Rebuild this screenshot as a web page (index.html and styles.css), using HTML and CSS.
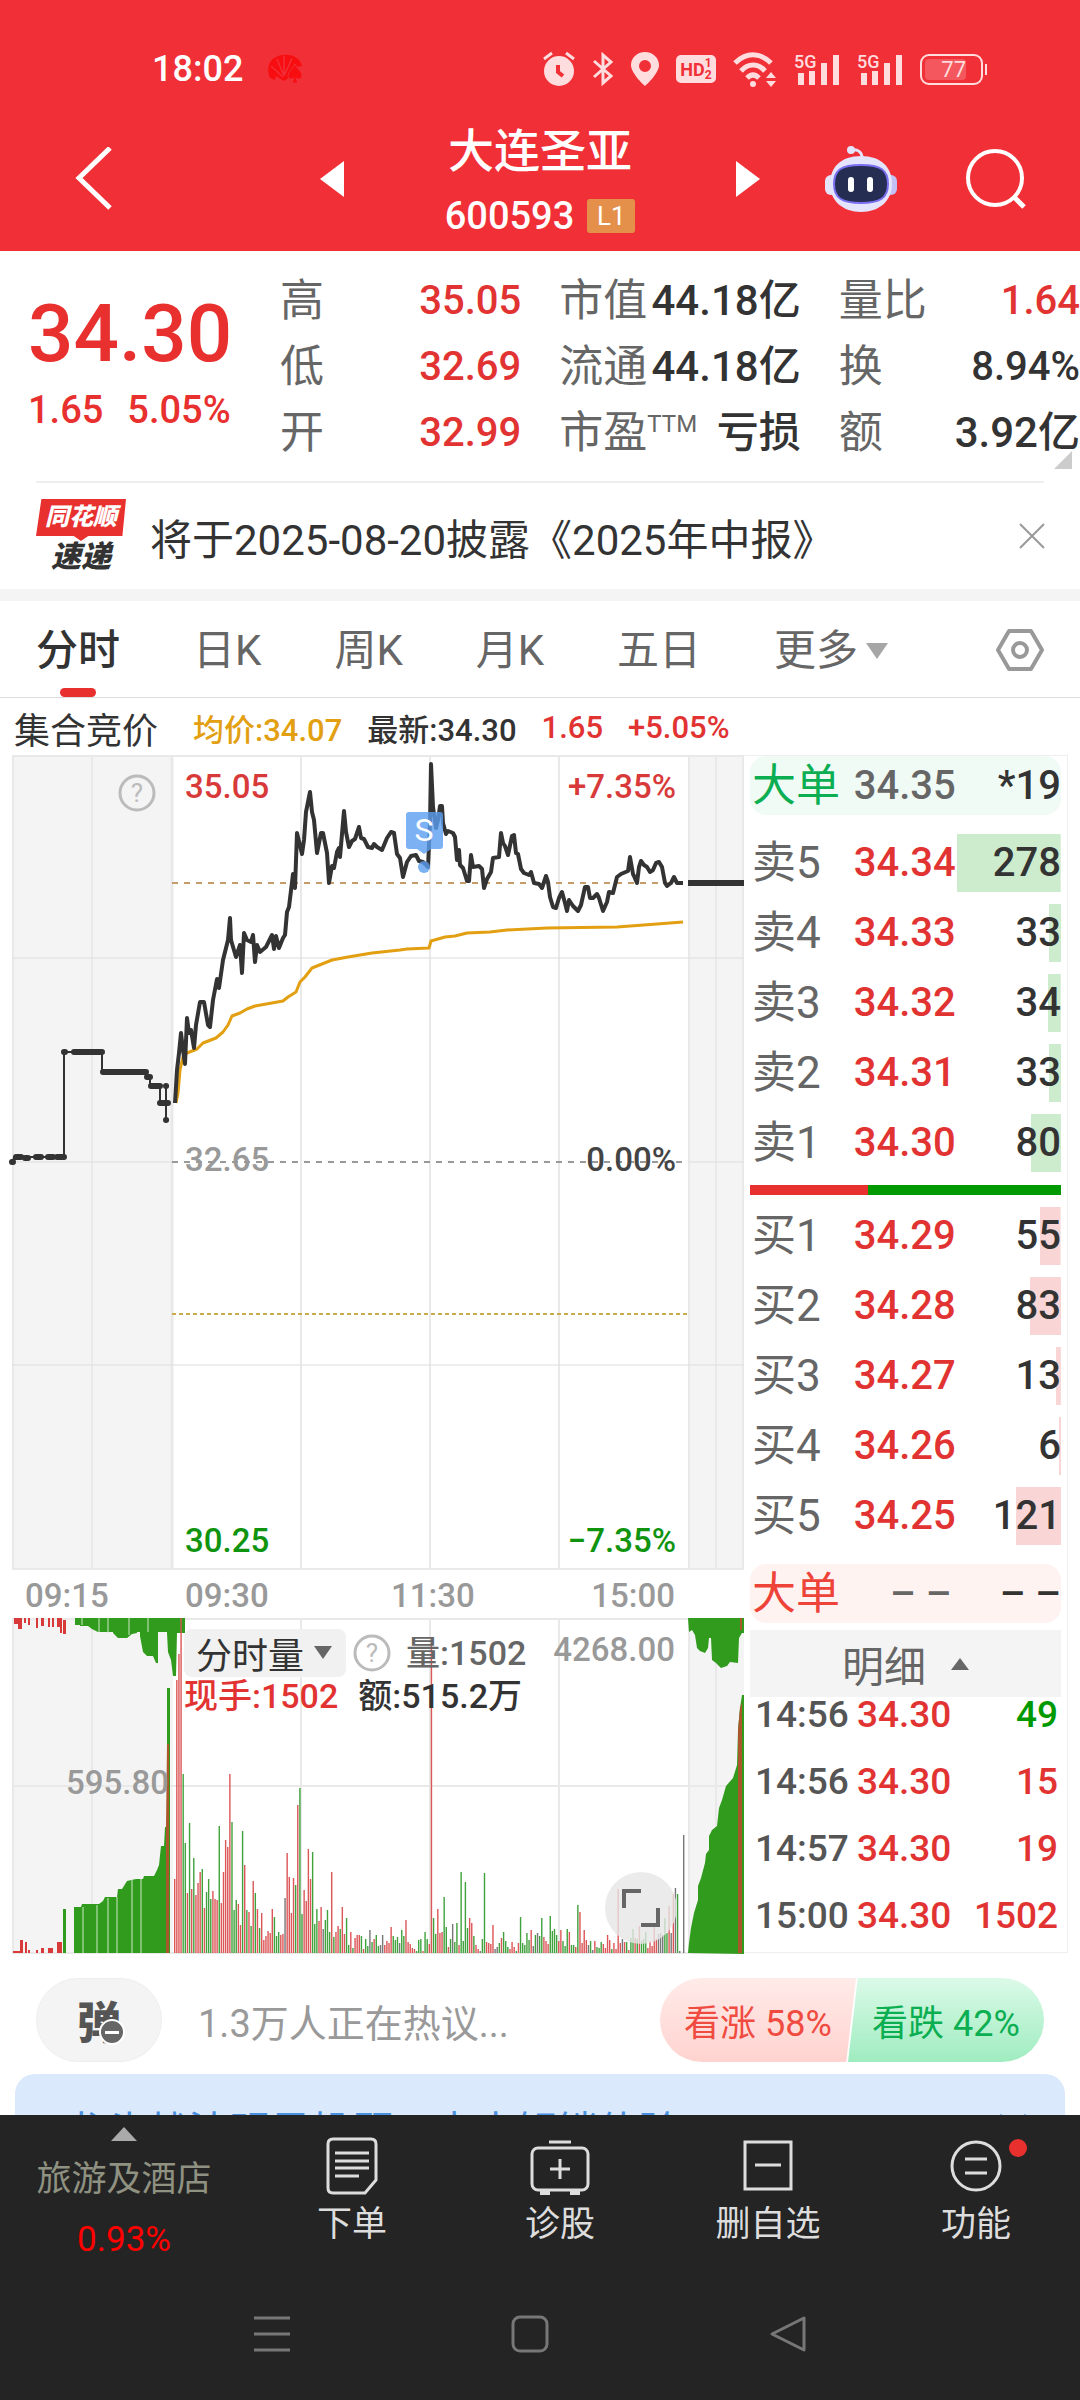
FILE: index.html
```html
<!DOCTYPE html>
<html lang="zh-CN">
<head>
  <meta charset="UTF-8">
  <meta name="viewport" content="width=device-width, initial-scale=1.0">
  <title>大连圣亚 600593</title>
  <link rel="stylesheet" href="styles.css">
</head>
<body>

<!-- 顶部 -->
<header class="header">
  <div class="status">
    <span class="clock">18:02</span>
    <svg class="huawei" width="36" height="30" viewBox="0 0 36 30" fill="#f80d10">
      <path d="M3 24C-1 15 2 6 9 3c6-3 14-3 19 0 4 2 6 5 7 9l-6 1-3 8-9 6-8-5-1 4z"/>
      <path d="M10 5l7 17M17 2v20M25 4l-7 16M4 12l12 11" stroke="#f12f37" stroke-width="1.5"/>
      <path d="M28 10c2 5 7 7 7 12 0 3-4 4-6 2l2 5h-6l2-5c-2 2-6 1-6-2 0-5 5-7 7-12z" stroke="#f12f37"/>
    </svg>
    <div class="status-icons">
      <svg width="32" height="36" viewBox="0 0 32 36"><circle cx="16" cy="20" r="15" fill="#ffdcdd"/><path d="M1 8l8-6M31 8l-8-6" stroke="#ffdcdd" stroke-width="3"/><path d="M15 14v7l5 4" stroke="#f12f37" stroke-width="4" fill="none"/></svg>
      <svg width="22" height="34" viewBox="0 0 22 34" fill="none" stroke="#ffdcdd" stroke-width="3"><path d="M2 9l17 15-8 7V3l8 7L2 25"/></svg>
      <svg width="28" height="36" viewBox="0 0 28 36"><path d="M14 1C6 1 0 7 0 14c0 9 14 21 14 21s14-12 14-21C28 7 22 1 14 1zm0 8a6 6 0 1 1 0 12 6 6 0 0 1 0-12z" fill="#ffdcdd" fill-rule="evenodd"/></svg>
      <span class="hd">HD<small>1<br>2</small></span>
      <svg width="44" height="36" viewBox="0 0 44 36" fill="none" stroke="#ffdcdd" stroke-width="5"><path d="M2 12c11-11 25-11 36 0M8 20c7-8 17-8 24 0M14 27c4-4 8-4 12 0"/><circle cx="20" cy="33" r="3" fill="#ffdcdd" stroke="none"/><path d="M33 27l5-6 5 6zM33 30l5 6 5-6z" fill="#ffdcdd" stroke="none"/></svg>
      <svg width="46" height="36" viewBox="0 0 46 36" fill="#ffdcdd"><text x="0" y="17" class="g5">5G</text><path d="M4 22h6v12H4zM15 20h6v14h-6zM27 12h6v22h-6zM39 4h6v30h-6z"/></svg>
      <svg width="46" height="36" viewBox="0 0 46 36" fill="#ffdcdd"><text x="0" y="17" class="g5">5G</text><path d="M4 22h6v12H4zM15 20h6v14h-6zM27 12h6v22h-6zM39 4h6v30h-6z"/></svg>
      <span class="battery"><span>77</span></span>
    </div>
  </div>

  <nav class="nav">
    <button class="icon-btn" aria-label="返回">
      <svg width="38" height="64" viewBox="0 0 38 64" fill="none" stroke="#fff" stroke-width="5"><path d="M35 1L4 31l31 30"/></svg>
    </button>
    <div class="nav-center">
      <button class="icon-btn" aria-label="上一只"><svg width="24" height="36" viewBox="0 0 24 36" fill="#fff"><path d="M24 0v36L0 18z"/></svg></button>
      <div class="title">
        <h1>大连圣亚</h1>
        <p><span class="num">600593</span><span class="tag">L1</span></p>
      </div>
      <button class="icon-btn" aria-label="下一只"><svg width="24" height="36" viewBox="0 0 24 36" fill="#fff"><path d="M0 0v36l24-18z"/></svg></button>
    </div>
    <div class="nav-right">
      <button class="icon-btn" aria-label="助手">
        <svg width="72" height="68" viewBox="0 0 72 68">
          <path d="M26 5c7-1 11 2 11 8" stroke="#e4e4fd" stroke-width="3" fill="none"/>
          <circle cx="26" cy="5" r="4" fill="#e4e4fd"/>
          <rect x="0" y="30" width="12" height="20" rx="6" fill="#e4e4fd"/><rect x="60" y="30" width="12" height="20" rx="6" fill="#c3c0f5"/>
          <path d="M36 11c20 0 31 11 31 28S54 67 36 67 5 56 5 39s11-28 31-28z" fill="#e4e4fd"/>
          <path d="M36 20c20 0 27 5 27 19s-8 19-27 19S9 53 9 39s7-19 27-19z" fill="#252e52" stroke="#7a6ff0" stroke-width="2"/>
          <rect x="23" y="32" width="6" height="15" rx="3" fill="#fff"/><rect x="42" y="32" width="6" height="15" rx="3" fill="#fff"/>
        </svg>
      </button>
      <button class="icon-btn" aria-label="搜索">
        <svg width="62" height="62" viewBox="0 0 62 62" fill="none" stroke="#fff" stroke-width="4"><circle cx="30" cy="30" r="27"/><path d="M49 49l10 10" stroke-width="5"/></svg>
      </button>
    </div>
  </nav>
</header>

<main class="content">
  <!-- 行情 -->
  <section class="quote">
    <div class="price num">
      <strong>34.30</strong>
      <p><span>1.65</span><span>5.05%</span></p>
    </div>
    <div class="stats">
      <dl>
        <div><dt>高</dt><dd class="num red">35.05</dd></div>
        <div><dt>低</dt><dd class="num red">32.69</dd></div>
        <div><dt>开</dt><dd class="num red">32.99</dd></div>
      </dl>
      <dl>
        <div><dt>市值</dt><dd class="num unit">44.18亿</dd></div>
        <div><dt>流通</dt><dd class="num unit">44.18亿</dd></div>
        <div><dt>市盈<sup>TTM</sup></dt><dd class="num unit">亏损</dd></div>
      </dl>
      <dl>
        <div><dt>量比</dt><dd class="num red">1.64</dd></div>
        <div><dt>换</dt><dd class="num">8.94%</dd></div>
        <div><dt>额</dt><dd class="num unit">3.92亿</dd></div>
      </dl>
    </div>
    <span class="corner"></span>
  </section>

  <section class="notice">
    <div class="express"><b>同花顺</b><i>速递</i></div>
    <a href="#">将于2025-08-20披露《2025年中报》</a>
    <button class="icon-btn" aria-label="关闭"><svg width="26" height="26" viewBox="0 0 26 26" stroke="#999" stroke-width="2"><path d="M1 1l24 24M25 1L1 25"/></svg></button>
  </section>

  <!-- 周期切换 -->
  <nav class="tabs">
    <a href="#" class="active">分时</a>
    <a href="#">日K</a>
    <a href="#">周K</a>
    <a href="#">月K</a>
    <a href="#">五日</a>
    <a href="#" class="more">更多<svg width="22" height="18" viewBox="0 0 22 18" fill="#a6a6a6"><path d="M0 1h22L11 17z"/></svg></a>
    <button class="icon-btn settings" aria-label="设置">
      <svg width="50" height="46" viewBox="0 0 50 46" fill="none" stroke="#999" stroke-width="4" stroke-linejoin="round"><path d="M14 5h22l11 19-11 19H14L3 24z"/><circle cx="25" cy="24" r="7"/></svg>
    </button>
  </nav>
  <div class="info">
    <span class="auction">集合竞价</span>
    <span class="num avg">均价:34.07</span>
    <span class="num">最新:34.30</span>
    <span class="num red">1.65</span>
    <span class="num red">+5.05%</span>
  </div>

  <section class="board">
    <div class="chart">
      <svg viewBox="0 0 744 1199">
        <!-- 分时 -->
        <path fill="#f4f4f4" d="M13 1h160v813H13zM689 1h55v813h-55zM13 863h160v335H13zM689 863h55v335h-55z"/>
        <g stroke="#e9e9e9" stroke-width="2" fill="none">
          <path d="M12 1h732M12 814h732M13 1v813M92 1v813M301 1v813M430 1v813M559 1v813M689 1v813M716 1v813M743 1v813"/>
          <path d="M172 1v813" stroke-width="3"/>
          <path d="M12 203h732M12 407h160M689 407h55M12 610h732" stroke-width="1" stroke="#ddd"/>
          <path d="M12 864h732M12 1031h732M12 1198h732M13 864v334M92 864v334M301 864v334M430 864v334M559 864v334M689 864v334M716 864v334"/>
        </g>
        <g fill="none" stroke-width="2">
          <path d="M172 128h516" stroke="#c69c6d" stroke-dasharray="6 6"/>
          <path d="M172 407h516" stroke="#999" stroke-dasharray="6 6"/>
          <path d="M172 559h516" stroke="#c9ab49" stroke-dasharray="4 3"/>
        </g>
        <path d="M13 407l1-5h50V297h38v20h44v5h4v9h10v17h6v17V331" fill="none" stroke="#333" stroke-width="2"/>
        <path d="M12 407h1M16 402h5M25 403h3M36 402h5M48 402h5M57 402h7M64 297h1M74 297h28M103 317h43M147 322h3M151 331h9M160 348h8M166 331h.1M166 365h.1" fill="none" stroke="#333" stroke-width="6" stroke-linecap="round"/>
        <polyline class="line avg-line" points="176,348 178,338 180,315 183,302 187,298 197,294 203,288 216,283 223,277 228,270 232,261 240,258 247,254 255,251 283,246 288,242 296,237 300,227 305,222 312,213 322,209 332,205 348,202 372,198 400,195 407,194 429,193 431,186 445,182 455,181 467,178 490,177 507,175 547,173 617,172 657,169 683,167"/>
        <polyline class="line" points="175,348 177,315 179,298 181,278 183,295 185,309 187,263 189,278 191,275 194,293 196,270 200,247 204,247 208,270 210,272 213,245 217,224 219,233 223,205 228,185 230,163 231,185 236,202 240,190 242,218 244,178 247,185 251,187 253,180 255,207 257,190 260,197 266,192 272,180 274,194 276,181 279,193 283,183 285,180 287,157 289,152 293,119 295,133 297,78 302,99 304,85 306,57 310,37 312,57 314,65 317,98 321,78 323,78 327,98 329,128 332,111 334,113 337,97 339,93 340,102 344,56 346,77 349,92 352,86 355,84 359,72 361,83 364,84 368,92 372,93 374,89 377,92 382,95 387,83 391,77 394,78 397,99 400,103 403,122 407,107 411,101 416,100 419,106 423,107 428,112 430,68 431,9 433,52 436,73 438,65 440,51 442,51 443,68 446,79 448,76 453,78 455,82 457,105 459,95 460,110 463,113 467,126 469,126 471,100 473,112 479,111 482,114 484,133 487,124 491,117 493,103 499,102 501,78 503,88 505,91 508,100 512,81 514,80 516,98 518,99 521,114 524,118 529,120 531,117 534,128 539,129 542,133 546,121 548,127 550,142 553,152 556,153 559,143 562,137 565,148 567,156 569,145 573,151 578,156 581,150 585,132 588,132 590,143 593,143 597,139 599,143 603,156 607,147 609,137 613,138 617,122 621,119 628,116 630,102 633,119 634,121 637,128 639,112 641,106 644,110 647,112 650,117 653,115 656,108 659,107 662,112 665,128 667,131 671,128 674,122 677,128 683,128"/>
        <path d="M688 128h56" stroke="#333" stroke-width="6"/>
        <g fill="#5b9df0" fill-opacity=".8">
          <path d="M409 57h31q3 0 3 3v31q0 3-3 3h-9l-7 5-7-5h-8q-3 0-3-3V60q0-3 3-3z"/>
          <circle cx="424" cy="112" r="6"/>
        </g>
        <text x="424" y="86" class="mark">S</text>
        <circle cx="137" cy="38" r="17" fill="none" stroke="#bbb" stroke-width="3"/>
        <text x="137" y="47" class="help">?</text>
        <g class="scale">
          <text x="185" y="43" fill="#d83a3a">35.05</text>
          <text x="676" y="43" fill="#d83a3a" class="end">+7.35%</text>
          <text x="185" y="416" fill="#999">32.65</text>
          <text x="676" y="416" fill="#444" class="end">0.00%</text>
          <text x="185" y="797" fill="#109410">30.25</text>
          <text x="676" y="797" fill="#109410" class="end">−7.35%</text>
        </g>
        <g class="scale" fill="#999">
          <text x="25" y="852">09:15</text>
          <text x="185" y="852">09:30</text>
          <text x="391" y="852">11:30</text>
          <text x="675" y="852" class="end">15:00</text>
        </g>
        <!-- 成交量 -->
        <g transform="translate(0 863)">
          <g fill="#319b1d">
            <path d="M75 0v7h5v1h8l4 3 6 3h15v1l5 5h9l5-4 5-1v-1h3v4l3 16 4 4h6l3 7h2V14h9v1l1 19 3 8 2 16h3l1-43h8V0z"/>
            <path d="M63 291h3v44h-3zM74 335v-46h7l1-3h17l4-3 2-4h12l1-8h4l5-8 9-2h7l1-3h10l3-6 2-5 2-19h3l1-19h2V70h3v265z"/>
            <path d="M688 0l1 14 3-2 3 5 2 13 3 3 5 2 3-5 1-10h2l1 22 4 3 5 5 6-2 3-4 8 1 1-25 3-5h2V0z"/>
            <path d="M688 335l1-10 2-15 3-15 4-13v-14l3-8 4-15 1-9 3-4v-14l3-6 5-4 2-18 3-8 4-14 7-8 4-13 1-35 2-22 2-13h2v259z"/>
          </g>
          <path fill="#a9572b" d="M166 209v126h3V126h-2zM738 112v223h4V84l-2 6zM740 0h2v12h-2z"/>
          <path stroke="#cfe8c8" d="M82 0v7M99 0v14M108 0v15M129 0v17M148 0v14M83 289v46M97 287v48M108 280v55M117 279v56M132 262v73M141 261v74"/>
          <path fill="#d83a3a" d="M14 0h4v6h-4zM18 0h4v11h-4zM24 0h2v5h-2zM28 0h2v7h-2zM36 0h2v10h-2zM41 0h3v8h-3zM48 0h2v9h-2zM52 0h2v9h-2zM57 0h3v9h-3zM60 0h2v15h-2zM63 2h3v14h-3zM13 333h7v2h-7zM20 322h3v13h-3zM25 324h2v11h-2zM28 332h2v3h-2zM36 332h2v3h-2zM41 330h3v5h-3zM48 330h5v5h-5zM57 324h5v11h-5z"/>
          <g id="volume"></g>
          <g class="scale" fill="#999">
            <text x="675" y="43" class="end">4268.00</text>
            <text x="169" y="176" class="end">595.80</text>
          </g>
        </g>
      </svg>
      <div class="volume-head">
        <p>
          <button class="select">分时量<svg width="18" height="14" viewBox="0 0 18 14" fill="#666"><path d="M0 0h18L9 13z"/></svg></button>
          <svg width="38" height="38" viewBox="0 0 38 38"><circle cx="19" cy="19" r="17" fill="none" stroke="#bbb" stroke-width="3"/><text x="19" y="28" class="help">?</text></svg>
          <span class="num vol">量:1502</span>
        </p>
        <p class="num deal"><span class="red">现手:1502</span><span>额:515.2万</span></p>
      </div>
      <button class="expand" aria-label="全屏"><svg width="38" height="38" viewBox="0 0 38 38" fill="none" stroke="#666" stroke-width="4"><path d="M2 19V2h17M36 19v17H19"/></svg></button>
    </div>

    <!-- 五档盘口 -->
    <div class="book">
      <table class="orders">
        <tr class="big sell"><th>大单</th><td>34.35</td><td>*19</td></tr>
        <tr class="gap"><td colspan="3"></td></tr>
        <tr class="ask"><th>卖5</th><td>34.34</td><td style="--v:278">278</td></tr>
        <tr class="ask"><th>卖4</th><td>34.33</td><td style="--v:33">33</td></tr>
        <tr class="ask"><th>卖3</th><td>34.32</td><td style="--v:34">34</td></tr>
        <tr class="ask"><th>卖2</th><td>34.31</td><td style="--v:33">33</td></tr>
        <tr class="ask"><th>卖1</th><td>34.30</td><td style="--v:80">80</td></tr>
      </table>
      <div class="ratio"></div>
      <table class="orders">
        <tr class="bid"><th>买1</th><td>34.29</td><td style="--v:55">55</td></tr>
        <tr class="bid"><th>买2</th><td>34.28</td><td style="--v:83">83</td></tr>
        <tr class="bid"><th>买3</th><td>34.27</td><td style="--v:13">13</td></tr>
        <tr class="bid"><th>买4</th><td>34.26</td><td style="--v:6">6</td></tr>
        <tr class="bid"><th>买5</th><td>34.25</td><td style="--v:121">121</td></tr>
        <tr class="gap"><td colspan="3"></td></tr>
        <tr class="big buy"><th>大单</th><td>– –</td><td>– –</td></tr>
      </table>
      <button class="detail">明细<svg width="18" height="12" viewBox="0 0 18 12" fill="#666"><path d="M0 12h18L9 0z"/></svg></button>
      <table class="trades">
        <tr><td>14:56</td><td>34.30</td><td class="green">49</td></tr>
        <tr><td>14:56</td><td>34.30</td><td>15</td></tr>
        <tr><td>14:57</td><td>34.30</td><td>19</td></tr>
        <tr><td>15:00</td><td>34.30</td><td>1502</td></tr>
      </table>
    </div>
  </section>

  <!-- 热议 -->
  <section class="talk">
    <button class="danmu" aria-label="弹幕">弹<span></span></button>
    <a href="#">1.3万人正在热议...</a>
    <div class="vote">
      <button class="up">看涨 58%</button>
      <button class="down">看跌 42%</button>
    </div>
  </section>
  <section class="promo">
    <span>龙头战法明星投顾，点击解锁体验</span>
    <svg width="28" height="28" viewBox="0 0 28 28" stroke="#4a90e2" stroke-width="3"><path d="M1 1l26 26M27 1L1 27"/></svg>
  </section>
</main>

<!-- 底部 -->
<footer class="footer">
  <nav class="toolbar">
    <a href="#" class="sector">
      <svg width="26" height="14" viewBox="0 0 26 14" fill="#aaa"><path d="M0 14h26L13 0z"/></svg>
      <span>旅游及酒店</span>
      <b>0.93%</b>
    </a>
    <a href="#">
      <svg width="60" height="58" viewBox="0 0 60 58" fill="none" stroke="#ddd" stroke-width="3"><path d="M11 2h38q5 0 5 5v36L43 56H11q-5 0-5-5V7q0-5 5-5z"/><path d="M13 16h34M13 24h34M13 31h34M13 39h24"/></svg>
      <span>下单</span>
    </a>
    <a href="#">
      <svg width="60" height="58" viewBox="0 0 60 58" fill="none" stroke="#ddd" stroke-width="3"><rect x="2" y="11" width="56" height="42" rx="6"/><path d="M19 5h22M30 22v20M20 32h20"/><path d="M10 56h10M40 56h10" stroke-width="4"/></svg>
      <span>诊股</span>
    </a>
    <a href="#">
      <svg width="60" height="58" viewBox="0 0 60 58" fill="none" stroke="#ddd" stroke-width="3"><path d="M7 5h46v47H7zM17 28h26"/></svg>
      <span>删自选</span>
    </a>
    <a href="#" class="dot">
      <svg width="60" height="58" viewBox="0 0 60 58" fill="none" stroke="#ddd" stroke-width="3"><circle cx="30" cy="29" r="24"/><path d="M19 22h22M19 36h22"/></svg>
      <span>功能</span>
    </a>
  </nav>
  <div class="system">
    <svg width="38" height="38" viewBox="0 0 38 38" stroke="#777" stroke-width="3"><path d="M1 3h36M1 19h36M1 35h36"/></svg>
    <svg width="38" height="38" viewBox="0 0 38 38" fill="none" stroke="#777" stroke-width="3"><rect x="2" y="2" width="34" height="34" rx="7"/></svg>
    <svg width="38" height="38" viewBox="0 0 38 38" fill="none" stroke="#777" stroke-width="3" stroke-linejoin="round"><path d="M35 3v32L3 19z"/></svg>
  </div>
</footer>

<script>
  // 每分钟成交量: 颜色 + 柱高
  const minutes = 'r74 r273 r299 r335 g179 g110 r60 g130 r64 g95 r58 r70 r81 g84 r45 g61 g74 g54 r62 r54 r53 g127 r50 r81 r113 r106 r179 g131 g43 g53 r49 r28 g122 r88 g43 r41 g27 r72 g60 r44 g25 r40 r13 r17 r22 r20 r44 g36 g17 g21 r18 r19 k55 r100 r76 r40 r75 g68 r148 g165 g39 r63 r52 r104 r74 g101 g29 g44 r32 r46 k24 g33 g43 g21 r81 g16 r21 r27 g24 r46 r19 g35 g8 r21 g5 r15 r18 r18 g17 r4 g14 g7 k23 g11 r14 g18 g7 k8 k18 r8 r12 r10 r26 g17 g13 g16 k10 g23 g17 r33 r11 r9 r5 r4 g2 g13 g14 r2 g21 g14 r9 r310 g35 g19 r44 r20 r21 g56 g26 r6 g14 k29 g11 g30 r8 g81 g12 g71 g25 r35 r30 g17 r8 r4 k2 g14 g80 r11 r10 r9 r28 k4 k6 g10 r15 g21 g12 g6 r4 r11 r6 g2 r10 g36 g10 g8 g20 g13 r23 k7 g18 k20 g17 g35 r16 r12 r9 g37 g22 g24 g18 r12 r23 g12 g7 g24 r21 g8 g8 r6 g48 r41 r10 r23 r13 k8 g12 k3 r12 g6 g5 g11 r9 r5 r18 r13 g4 r10 r4 r64 r10 k14 r11 g11 r3 g15 g24 r15 g14 r27 g12 g14 g21 r5 r12 r7 r28 r14 k19 k20 k18 g35 g20 r47 k20 r59 k65 g59 k2';
  const colors = { r: '#dc5557', g: '#3fa23c', k: '#777' };
  const volume = document.getElementById('volume');

  function addBar(x, height, color) {
    const bar = document.createElementNS('http://www.w3.org/2000/svg', 'rect');
    bar.setAttribute('x', x);
    bar.setAttribute('y', 335 - height);
    bar.setAttribute('width', 1.4);
    bar.setAttribute('height', height);
    bar.setAttribute('fill', colors[color]);
    volume.appendChild(bar);
  }

  const list = minutes.split(' ');
  list.forEach(function(item, i) {
    addBar(174 + i * 505 / (list.length - 1), Number(item.slice(1)), item[0]);
  });
  // 收盘集合竞价
  addBar(683, 118, 'k');
</script>

</body>
</html>
```

FILE: styles.css
```css
* {
  box-sizing: border-box;
}
body {
  margin: 0;
  height: 100vh;
  display: flex;
  flex-direction: column;
  background: #fff;
  color: #333;
  font-family: Roboto, "Noto Sans CJK SC", sans-serif;
  overflow: hidden;
}
h1, p, dl, dd {
  margin: 0;
}
a {
  color: inherit;
  text-decoration: none;
}
button {
  border: none;
  background: none;
  padding: 0;
  font-family: inherit;
  color: inherit;
  cursor: pointer;
}
svg {
  display: block;
  flex: none;
}
.icon-btn {
  display: block;
}
.num {
  font-weight: 500;
}
.red {
  color: #e23333;
}

/* 顶部 */
.header {
  flex: none;
  background: #f12f37;
  color: #fff;
}
.status {
  display: flex;
  align-items: center;
  height: 106px;
  padding: 32px 93px 0 152px;
}
.clock {
  font-size: 36px;
  font-weight: 500;
}
.huawei {
  margin-left: 24px;
}
.status-icons {
  display: flex;
  align-items: center;
  gap: 17px;
  margin-left: auto;
  color: #ffdcdd;
}
.hd {
  display: flex;
  align-items: center;
  justify-content: center;
  width: 40px;
  height: 28px;
  border-radius: 5px;
  background: #ffdcdd;
  color: #f12f37;
  font-size: 18px;
  font-weight: 700;
}
.hd small {
  font-size: 12px;
  line-height: 12px;
}
.g5 {
  font-size: 18px;
  font-weight: 500;
}
.battery {
  position: relative;
  width: 63px;
  height: 31px;
  margin-right: 4px;
  padding: 3px;
  border: 2px solid #ffdcdd;
  border-radius: 9px;
}
.battery::after {
  content: "";
  position: absolute;
  right: -6px;
  top: 8px;
  width: 2px;
  height: 11px;
  background: #ffdcdd;
}
.battery span {
  display: block;
  width: 41px;
  border-radius: 4px;
  background: #f4585e;
  font-size: 22px;
  line-height: 21px;
  text-align: right;
}
.nav {
  display: grid;
  grid-template-columns: 1fr 440px 1fr;
  align-items: center;
  height: 145px;
}
.nav > .icon-btn {
  margin-left: 75px;
}
.nav-center {
  display: flex;
  align-items: center;
  justify-content: space-between;
}
.title h1 {
  font-size: 46px;
  font-weight: 500;
  line-height: 54px;
  text-align: center;
}
.title p {
  display: flex;
  align-items: center;
  justify-content: center;
  gap: 13px;
  height: 36px;
  margin-top: 20px;
  font-size: 38px;
}
.tag {
  width: 48px;
  border-radius: 3px;
  background: #e5904a;
  font-size: 26px;
  line-height: 34px;
  text-align: center;
}
.nav-right {
  display: flex;
  align-items: center;
  justify-content: flex-end;
  gap: 68px;
  padding-right: 53px;
}

/* 行情 */
.content {
  flex: 1;
  min-height: 0;
  overflow: hidden;
}
.quote {
  position: relative;
  display: grid;
  grid-template-columns: 252px 1fr;
  padding: 17px 0 17px 28px;
}
.quote::after {
  content: "";
  position: absolute;
  left: 36px;
  right: 36px;
  bottom: 0;
  height: 2px;
  background: #eee;
}
.price {
  padding-top: 20px;
  color: #e8302f;
}
.price strong {
  display: block;
  font-size: 80px;
  font-weight: 500;
  line-height: 92px;
}
.price p {
  display: flex;
  gap: 24px;
  font-size: 38px;
  line-height: 60px;
}
.stats {
  display: grid;
  grid-template-columns: repeat(3, minmax(0, 1fr));
  gap: 38px;
}
.stats dl div {
  display: flex;
  justify-content: space-between;
  height: 66px;
  font-size: 44px;
  line-height: 66px;
  white-space: nowrap;
}
.stats dt {
  color: #666;
}
.stats dd {
  font-size: 40px;
}
.stats .unit {
  font-size: 42px;
}
.stats sup {
  font-size: 24px;
  line-height: 24px;
}
.corner {
  position: absolute;
  right: 8px;
  bottom: 14px;
  border: 9px solid;
  border-color: transparent #ccc #ccc transparent;
}
.notice {
  display: flex;
  align-items: center;
  height: 106px;
  padding: 0 35px 0 36px;
}
.notice a {
  flex: 1;
  font-size: 42px;
}
.express {
  width: 90px;
  margin-right: 24px;
  text-align: center;
  font-style: italic;
  font-weight: 900;
}
.express b {
  display: block;
  height: 42px;
  background: #e8302f;
  clip-path: polygon(6% 0, 100% 0, 96% 88%, 58% 88%, 50% 100%, 42% 88%, 0 88%);
  color: #fff;
  font-size: 24px;
  line-height: 36px;
}
.express i {
  display: block;
  font-size: 30px;
  line-height: 32px;
}

/* 周期切换 */
.tabs {
  display: flex;
  align-items: center;
  gap: 73px;
  height: 109px;
  padding: 0 35px 0 36px;
  border-top: 12px solid #f4f4f4;
  border-bottom: 1px solid #ddd;
  color: #666;
  font-size: 42px;
  line-height: 96px;
}
.tabs a {
  position: relative;
  padding-top: 4px;
  line-height: 92px;
}
.tabs .active {
  color: #333;
  font-weight: 500;
}
.tabs .active::after {
  content: "";
  position: absolute;
  left: 24px;
  right: 24px;
  bottom: 0;
  height: 9px;
  border-radius: 5px;
  background: #e8302f;
}
.tabs .more {
  display: flex;
  align-items: center;
  gap: 8px;
}
.settings {
  margin-left: auto;
}
.info {
  display: flex;
  align-items: center;
  gap: 25px;
  height: 57px;
  padding: 2px 0 0 14px;
  font-size: 31px;
}
.auction {
  margin-right: 10px;
  font-size: 36px;
}
.avg {
  color: #e39f12;
}

/* 图表 */
.board {
  display: grid;
  grid-template-columns: minmax(0, 744fr) minmax(0, 336fr);
  align-items: start;
}
.chart {
  position: relative;
}
.chart > svg {
  width: 100%;
}
.line {
  fill: none;
  stroke: #333;
  stroke-width: 4;
  stroke-linejoin: round;
}
.avg-line {
  stroke: #e39f12;
  stroke-width: 3;
}
.scale {
  font-size: 33px;
  font-weight: 500;
}
.end {
  text-anchor: end;
}
.mark {
  font-size: 32px;
  fill: #fff;
  text-anchor: middle;
}
.help {
  font-size: 26px;
  fill: #bbb;
  text-anchor: middle;
}
.volume-head {
  position: absolute;
  left: 184px;
  bottom: 239px;
  font-size: 34px;
  line-height: 38px;
}
.volume-head p {
  display: flex;
  align-items: center;
  gap: 7px;
}
.volume-head .deal {
  gap: 20px;
}
.select {
  display: flex;
  align-items: center;
  gap: 10px;
  height: 48px;
  padding: 0 14px 0 12px;
  border-radius: 8px;
  background: #f1f1f1;
  font-size: 36px;
}
.vol {
  margin-left: 8px;
  color: #666;
}
.expand {
  position: absolute;
  right: 67px;
  bottom: 10px;
  display: grid;
  place-items: center;
  width: 72px;
  height: 72px;
  border-radius: 50%;
  background: rgba(230, 230, 230, 0.8);
}

/* 盘口 */
.book {
  margin-right: 12px;
  padding: 0 6px;
  border: 1px solid #eee;
  border-left: none;
}
.orders,
.trades {
  width: 100%;
  border-collapse: collapse;
  table-layout: fixed;
}
.orders tr {
  height: 70px;
}
.orders th,
.orders td {
  padding: 0;
  font-size: 40px;
  font-weight: 500;
  line-height: 58px;
  text-align: right;
}
.orders th {
  padding-left: 2px;
  color: #666;
  font-size: 44px;
  font-weight: 400;
  text-align: left;
  white-space: nowrap;
}
.orders td:nth-child(2) {
  padding-right: 6px;
  color: #e23333;
}
.orders .big {
  height: 59px;
}
.orders .gap {
  height: 13px;
}
.orders .gap td {
  line-height: 0;
}
.orders .big th:first-child {
  border-radius: 16px 0 0 16px;
}
.orders .big td:last-child {
  border-radius: 0 16px 16px 0;
}
.orders .big td:nth-child(2) {
  color: #666;
}
.sell th,
.sell td {
  background: #f1fbf6;
}
.orders .sell th {
  color: #0cae52;
}
.buy th,
.buy td {
  background: #fff3f2;
}
.orders .buy th {
  color: #ee4338;
}
.ask td:last-child,
.bid td:last-child {
  --bar: #cdebcd;
  background: linear-gradient(var(--bar), var(--bar)) right center / calc(var(--v) / 278 * 100%) 58px no-repeat;
}
.bid td:last-child {
  --bar: #f9d5d5;
}
.ratio {
  height: 10px;
  margin: 7px 0 6px;
  background: linear-gradient(90deg, #e8302f 38%, #009a00 38%);
}
.detail {
  display: flex;
  align-items: center;
  justify-content: center;
  gap: 25px;
  width: 100%;
  height: 67px;
  margin-top: 7px;
  background: #f4f4f4;
  color: #666;
  font-size: 42px;
}
.trades td {
  height: 67px;
  padding: 0 3px 31px 0;
  color: #e23333;
  font-size: 37px;
  font-weight: 500;
  line-height: 36px;
  text-align: right;
}
.trades td:nth-child(2) {
  padding-right: 6px;
}
.trades tr:last-child td {
  height: 54px;
  padding-bottom: 18px;
}
.trades td:first-child {
  padding-left: 5px;
  color: #555;
  text-align: left;
}
.trades .green {
  color: #009a00;
}

/* 热议 */
.talk {
  display: flex;
  align-items: center;
  padding: 24px 36px 12px;
}
.danmu {
  position: relative;
  width: 126px;
  height: 84px;
  margin-right: 36px;
  border: 1px solid #eee;
  border-radius: 42px;
  background: #f4f4f4;
  color: #555;
  font-size: 44px;
  font-weight: 900;
}
.danmu span {
  position: absolute;
  right: 36px;
  bottom: 16px;
  width: 26px;
  height: 26px;
  border: 2px solid #fff;
  border-radius: 50%;
  background: linear-gradient(#fff, #fff) center / 14px 3px no-repeat #666;
}
.talk a {
  flex: 1;
  color: #999;
  font-size: 38px;
}
.vote {
  display: flex;
}
.vote button {
  width: 196px;
  height: 84px;
  font-size: 36px;
}
.vote .up {
  border-radius: 42px 0 0 42px;
  background: linear-gradient(#ffebe9, #ffd3cf);
  clip-path: polygon(0 0, 100% 0, 95% 100%, 0 100%);
  color: #f04b40;
}
.vote .down {
  margin-left: -8px;
  border-radius: 0 42px 42px 0;
  background: linear-gradient(#dbfae8, #9fecc0);
  clip-path: polygon(5% 0, 100% 0, 100% 100%, 0 100%);
  color: #0cae52;
}
.promo {
  display: flex;
  align-items: center;
  justify-content: space-between;
  height: 108px;
  margin: 0 15px;
  padding: 0 38px 0 50px;
  border-radius: 20px;
  background: #dbe9fc;
  color: #4a90e2;
  font-size: 41px;
}

/* 底部 */
.footer {
  flex: none;
  background: #242424;
  color: #ddd;
}
.toolbar {
  display: grid;
  grid-template-columns: 248fr repeat(4, 208fr);
  height: 153px;
  font-size: 35px;
  line-height: 60px;
}
.toolbar a {
  position: relative;
  display: flex;
  flex-direction: column;
  align-items: center;
  padding-top: 22px;
}
.toolbar .sector {
  padding-top: 12px;
  color: #8f9181;
}
.sector svg {
  margin-bottom: 9px;
}
.sector b {
  color: #f00;
  font-weight: 400;
}
.dot::after {
  content: "";
  position: absolute;
  left: 137px;
  top: 24px;
  width: 18px;
  height: 18px;
  border-radius: 50%;
  background: #e8302f;
}
.system {
  display: grid;
  grid-template-columns: repeat(3, 1fr);
  place-items: center;
  height: 132px;
  padding: 0 163px 0 143px;
}
```
